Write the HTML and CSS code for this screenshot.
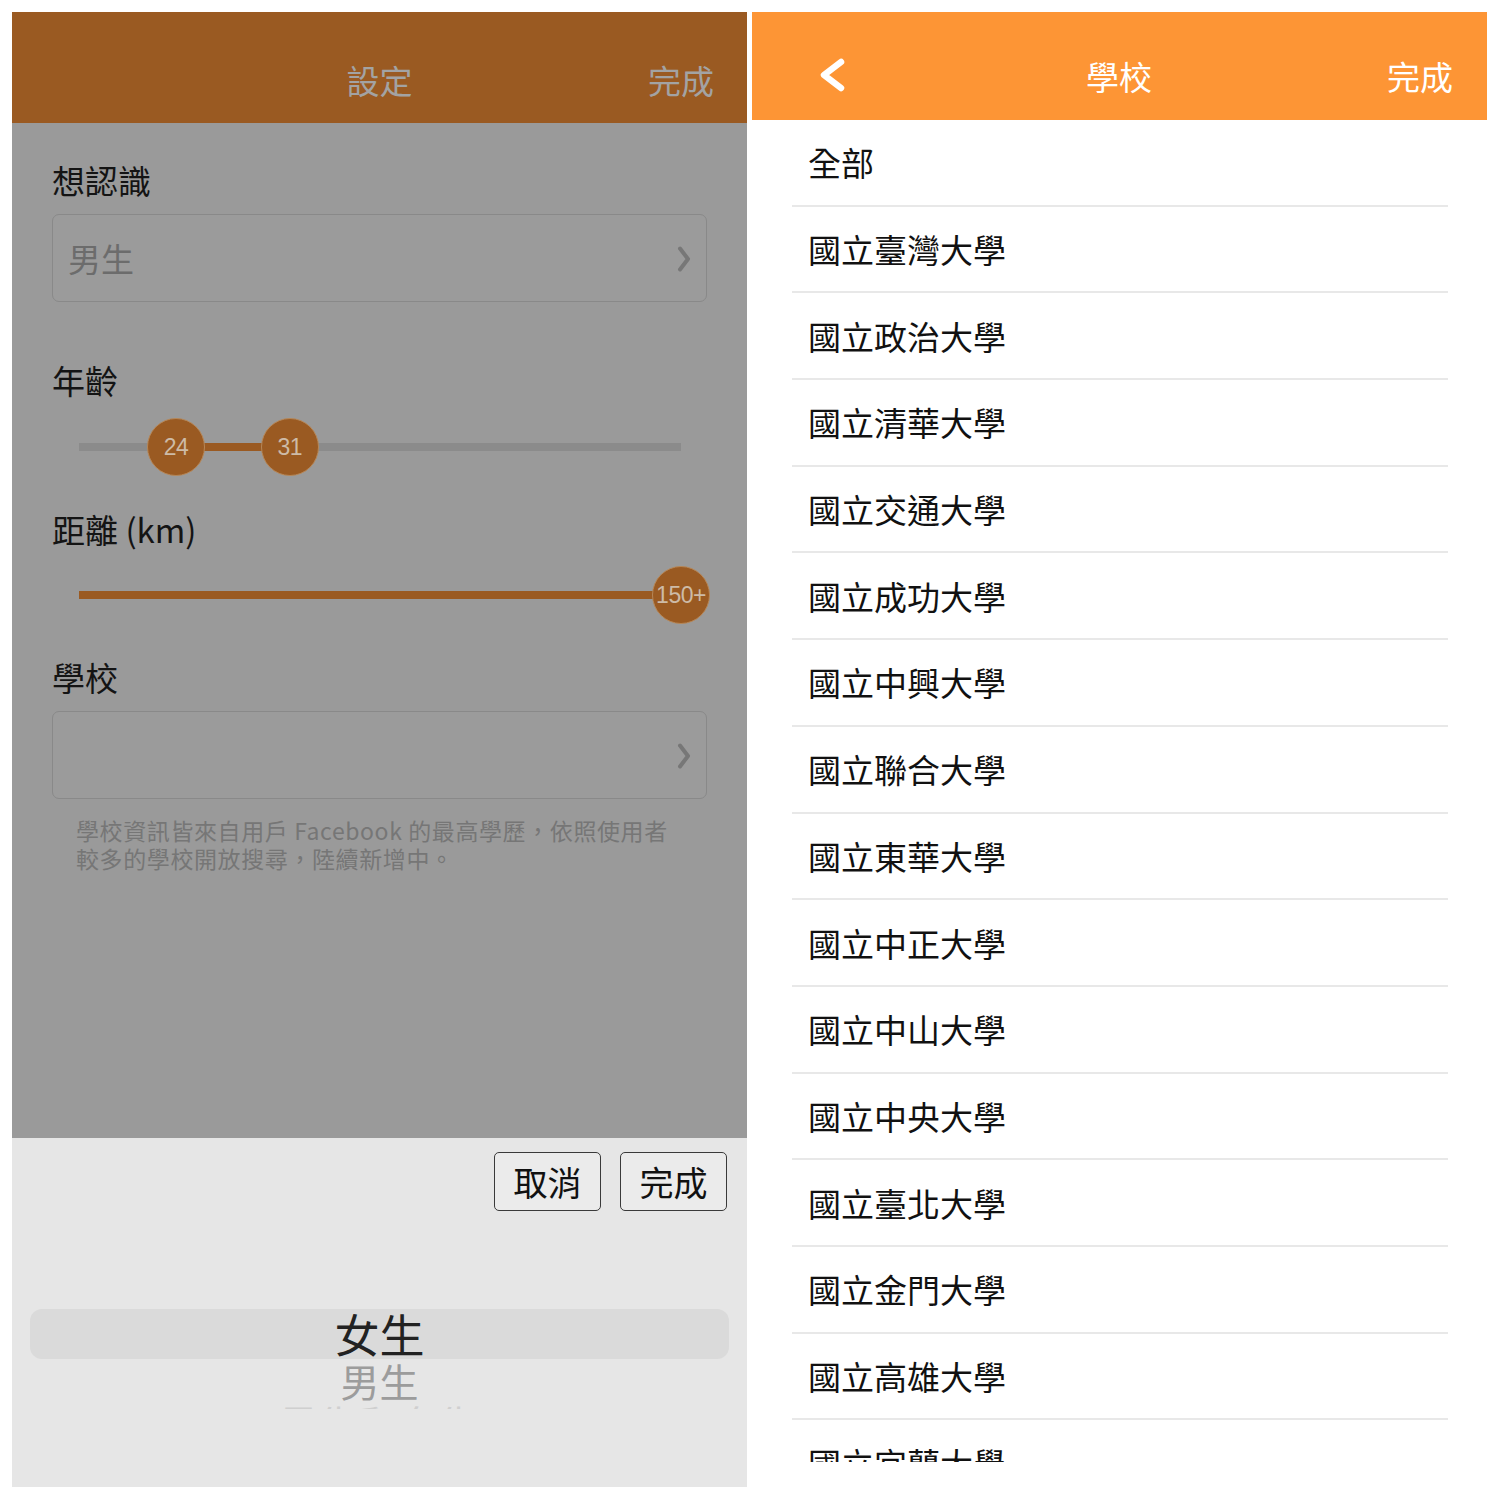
FILE: index.html
```html
<!DOCTYPE html>
<html lang="zh-Hant">
<head>
<meta charset="utf-8">
<title>設定 / 學校</title>
<link rel="stylesheet" href="styles.css">
</head>
<body>
<div class="page">
  <section class="panel settings">
    <header class="bar bar-dark">
      <div class="bar-side"></div>
      <div class="bar-title">設定</div>
      <div class="bar-side bar-action">完成</div>
    </header>
    <div class="settings-body">
      <div class="label">想認識</div>
      <div class="field">
        <span class="field-value">男生</span>
        <svg class="field-chev" width="14" height="28" viewBox="0 0 14 28"><polyline points="3,3.5 11,14 3,24.5" fill="none" stroke="#777777" stroke-width="4" stroke-linecap="round" stroke-linejoin="round"/></svg>
      </div>

      <div class="label label-gap">年齡</div>
      <div class="slider">
        <div class="track"></div>
        <div class="track-fill" style="left:16.1%;width:18.9%"></div>
        <div class="thumb" style="left:16.1%">24</div>
        <div class="thumb" style="left:35%">31</div>
      </div>

      <div class="label label-gap2">距離 (km)</div>
      <div class="slider slider-2">
        <div class="track"></div>
        <div class="track-fill" style="left:0;width:100%"></div>
        <div class="thumb" style="left:100%">150+</div>
      </div>

      <div class="label label-gap3">學校</div>
      <div class="field">
        <span class="field-value"></span>
        <svg class="field-chev" width="14" height="28" viewBox="0 0 14 28"><polyline points="3,3.5 11,14 3,24.5" fill="none" stroke="#777777" stroke-width="4" stroke-linecap="round" stroke-linejoin="round"/></svg>
      </div>
      <p class="note">學校資訊皆來自用戶 Facebook 的最高學歷，依照使用者<br>較多的學校開放搜尋，陸續新增中。</p>
    </div>
    <div class="picker">
      <div class="picker-buttons">
        <button class="pbtn">取消</button>
        <button class="pbtn">完成</button>
      </div>
      <div class="wheel">
        <div class="wheel-band"></div>
        <div class="wheel-item selected">女生</div>
        <div class="wheel-item next">男生</div>
        <div class="wheel-item far"><span>男生和女生</span></div>
      </div>
    </div>
  </section>

  <section class="panel schools">
    <header class="bar bar-orange">
      <div class="bar-side">
        <svg class="back" width="28" height="34" viewBox="0 0 28 34"><polyline points="23,4 6,17 23,30" fill="none" stroke="#ffffff" stroke-width="6.5" stroke-linecap="round" stroke-linejoin="round"/></svg>
      </div>
      <div class="bar-title">學校</div>
      <div class="bar-side bar-action">完成</div>
    </header>
    <ul class="list">
      <li>全部</li>
      <li>國立臺灣大學</li>
      <li>國立政治大學</li>
      <li>國立清華大學</li>
      <li>國立交通大學</li>
      <li>國立成功大學</li>
      <li>國立中興大學</li>
      <li>國立聯合大學</li>
      <li>國立東華大學</li>
      <li>國立中正大學</li>
      <li>國立中山大學</li>
      <li>國立中央大學</li>
      <li>國立臺北大學</li>
      <li>國立金門大學</li>
      <li>國立高雄大學</li>
      <li>國立宜蘭大學</li>
    </ul>
  </section>
</div>
</body>
</html>
```

FILE: styles.css
```css
* { box-sizing: border-box; }
html, body { margin: 0; padding: 0; background: #ffffff; }
body {
  font-family: "Noto Sans CJK TC", "Noto Sans", "Liberation Sans", sans-serif;
  color: #111;
}
.page {
  display: flex;
  gap: 5px;
  padding: 12px 13px 0 12px;
  align-items: flex-start;
}
.panel {
  width: 735px;
  display: flex;
  flex-direction: column;
  overflow: hidden;
}
.panel > * { flex-shrink: 0; }
.settings { height: 1475px; }
.schools { height: 1450px; background: #fff; }

/* header bars */
.bar {
  display: flex;
  align-items: flex-end;
  font-size: 33px;
  line-height: 40px;
  padding: 0 33px 23px 33px;
}
.bar-dark { height: 111px; background: #9a5a22; color: #a3a3a3; }
.bar-orange { height: 108px; background: #fd9535; color: #ffffff; padding-bottom: 24px; padding-right: 34px; }
.bar-side { width: 140px; display: flex; align-items: center; }
.bar-title { flex: 1; text-align: center; }
.bar-action { justify-content: flex-end; }
.back { margin-left: 33px; margin-bottom: 4px; }

/* settings body */
.settings-body {
  height: 1015px;
  background: #9a9a9a;
  padding: 37px 40px 0 40px;
}
.label {
  font-size: 33px;
  line-height: 40px;
  color: #141414;
}
.label-gap { margin-top: 58px; }
.label-gap2 { margin-top: 33px; }
.label-gap3 { margin-top: 33px; }
.field {
  margin-top: 14px;
  height: 88px;
  border: 1.5px solid #898989;
  border-radius: 7px;
  background: #9b9b9b;
  display: flex;
  align-items: center;
  justify-content: space-between;
  padding: 0 15px 0 15px;
  font-size: 33px;
  color: #6c6c6c;
}
.field-chev { margin-top: 2px; }

.slider {
  position: relative;
  margin: 18px 0 0 27px;
  width: 602px;
  height: 58px;
}
.slider-2 { margin-top: 17px; }
.track, .track-fill {
  position: absolute;
  top: 25px;
  height: 8px;
}
.track { left: 0; right: 0; background: #8b8b8b; }
.track-fill { background: #9a5a22; }
.thumb {
  position: absolute;
  top: 0;
  width: 58px;
  height: 58px;
  margin-left: -29px;
  border-radius: 50%;
  background: #9a5a22;
  border: 1px solid #b68758;
  color: #cdbba7;
  font-family: "Liberation Sans", "Noto Sans", sans-serif;
  font-size: 23px;
  letter-spacing: -0.5px;
  display: flex;
  align-items: center;
  justify-content: center;
}
.note {
  margin: 17px 0 0 24px;
  font-size: 23px;
  line-height: 28px;
  letter-spacing: 0.6px;
  color: #767676;
  white-space: nowrap;
}

/* picker */
.picker {
  height: 349px;
  background: #e6e6e6;
  display: flex;
  flex-direction: column;
}
.picker-buttons {
  display: flex;
  justify-content: flex-end;
  gap: 19px;
  padding: 14px 20px 0 0;
}
.pbtn {
  width: 107px;
  height: 59px;
  border: 1.5px solid #3a3a3a;
  border-radius: 5px;
  background: #ebebeb;
  font-family: "Noto Sans CJK TC", "Noto Sans", sans-serif;
  font-size: 34px;
  line-height: 1;
  color: #111;
  padding: 0;
}
.wheel {
  position: relative;
  margin-top: 98px;
  height: 102px;
  overflow: hidden;
}
.wheel-band {
  position: absolute;
  left: 18px;
  right: 18px;
  top: 0;
  height: 50px;
  border-radius: 12px;
  background: #dadada;
}
.wheel-item {
  position: relative;
  text-align: center;
}
.selected {
  font-size: 45px;
  line-height: 50px;
  color: #222;
}
.next {
  font-size: 39px;
  line-height: 42px;
  color: #9c9c9c;
}
.far {
  height: 8px;
  overflow: hidden;
  font-size: 38px;
  line-height: 50px;
  color: #cfcfcf;
  letter-spacing: 2px;
}
.far span { display: inline-block; transform: scaleY(0.6); transform-origin: top; margin-top: -2px; }

/* school list */
.list {
  list-style: none;
  margin: 0;
  padding: 0;
}
.list li {
  height: 86.7px;
  margin: 0 39px 0 40px;
  padding-left: 16px;
  border-bottom: 2px solid #e8e8e8;
  display: flex;
  align-items: center;
  font-size: 33px;
  color: #111;
}
```
